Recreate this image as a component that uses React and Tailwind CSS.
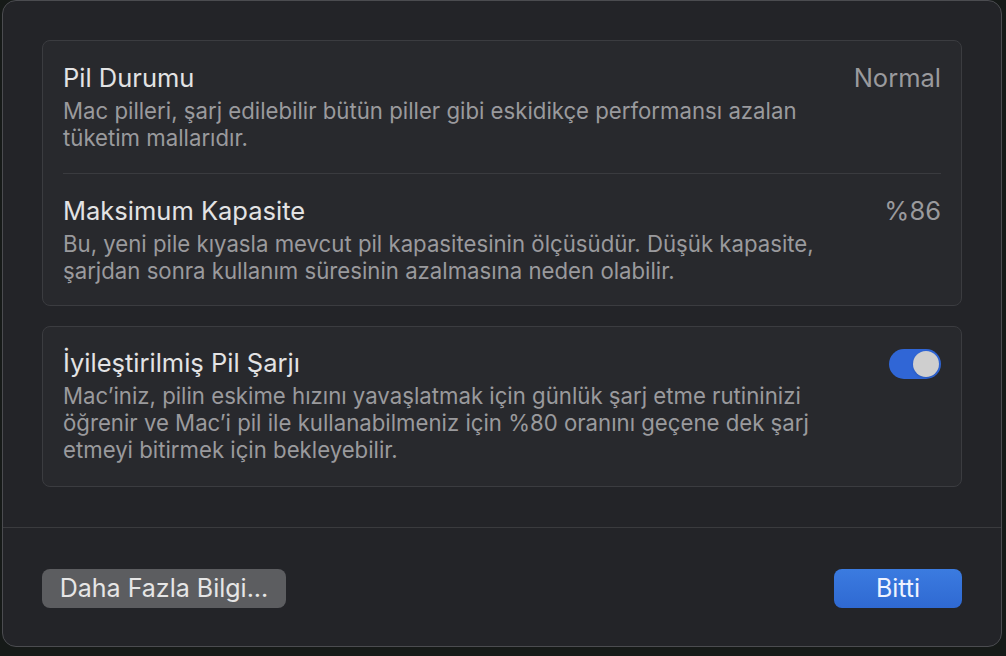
import React, { useState } from 'react';

const Row = ({ title, value, children }) => (
  <div className="flex items-start justify-between gap-6">
    <div className="flex flex-col">
      <div className="text-[25.5px] leading-[30px] text-[#e3e3e4]">{title}</div>
      <div className="mt-[4px] text-[22.2px] leading-[27px] text-[#9a9a9d] whitespace-nowrap">{children}</div>
    </div>
    <div className="text-[25.5px] leading-[30px] text-[#9a9a9d]">{value}</div>
  </div>
);

const Toggle = ({ on, onChange }) => (
  <button
    onClick={() => onChange(!on)}
    className={`mt-[1px] flex h-[30px] w-[52px] shrink-0 items-center rounded-full px-[2px] ${on ? 'justify-end bg-[#3066d6]' : 'justify-start bg-[#4a4b4f]'}`}
  >
    <span className="h-[26px] w-[26px] rounded-full bg-[#cfcfcf] shadow" />
  </button>
);

const App = () => {
  const [optimized, setOptimized] = useState(true);

  return (
    <div
      className="h-[656px] w-[1006px] overflow-hidden bg-[#161a18] pl-[2px]"
      style={{ fontFamily: 'Inter, "Noto Sans", sans-serif' }}
    >
      <div className="flex h-[647px] w-[1000px] flex-col rounded-[14px] border border-[#4b4c50] bg-[#232428]">
        <div className="flex flex-col gap-[20px] px-[39px] pt-[39px]">
          <div className="rounded-[8px] border border-[#3b3c40] bg-[#28292d] px-[20px]">
            <div className="pt-[22px] pb-[22px]">
              <Row title="Pil Durumu" value="Normal">
                Mac pilleri, şarj edilebilir bütün piller gibi eskidikçe performansı azalan
                <br />
                tüketim mallarıdır.
              </Row>
            </div>
            <div className="h-px bg-[#3a3b3f]" />
            <div className="pt-[22px] pb-[21px]">
              <Row title="Maksimum Kapasite" value="%86">
                Bu, yeni pile kıyasla mevcut pil kapasitesinin ölçüsüdür. Düşük kapasite,
                <br />
                şarjdan sonra kullanım süresinin azalmasına neden olabilir.
              </Row>
            </div>
          </div>

          <div className="rounded-[8px] border border-[#3b3c40] bg-[#28292d] px-[20px] pt-[21px] pb-[23px]">
            <Row title="İyileştirilmiş Pil Şarjı" value={<Toggle on={optimized} onChange={setOptimized} />}>
              Mac’iniz, pilin eskime hızını yavaşlatmak için günlük şarj etme rutininizi
              <br />
              öğrenir ve Mac’i pil ile kullanabilmeniz için %80 oranını geçene dek şarj
              <br />
              etmeyi bitirmek için bekleyebilir.
            </Row>
          </div>
        </div>

        <div className="mt-[40px] h-px bg-[#3a3b3e]" />

        <div className="flex items-center justify-between px-[39px] pt-[41px]">
          <button className="h-[39px] w-[244px] rounded-[8px] bg-[#5c5d60] text-[25px] text-[#e6e6e6]">
            Daha Fazla Bilgi...
          </button>
          <button className="h-[39px] w-[128px] rounded-[8px] bg-gradient-to-b from-[#3b7be0] to-[#2f69d2] text-[25px] text-[#eef3ff]">
            Bitti
          </button>
        </div>
      </div>
    </div>
  );
};

export default App;
